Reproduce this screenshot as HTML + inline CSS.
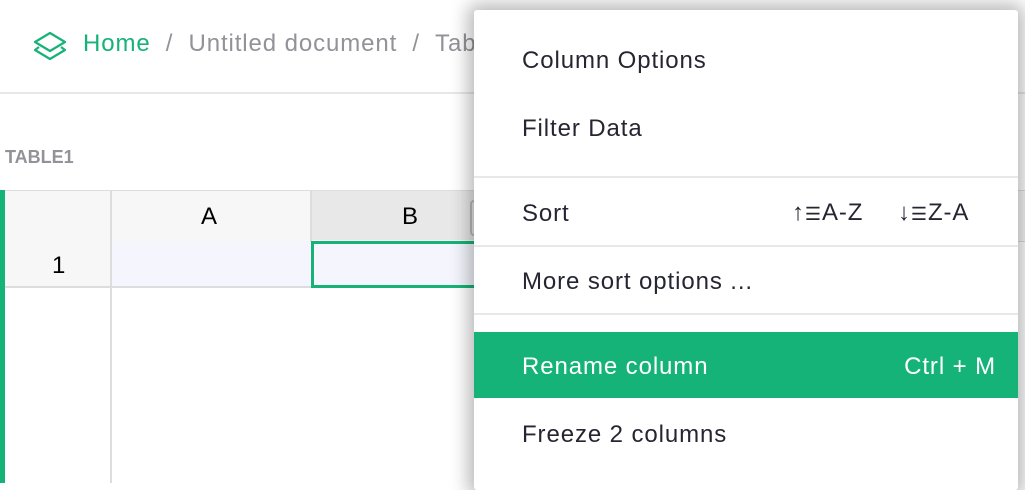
<!DOCTYPE html>
<html><head><style>
body{margin:0;width:1025px;height:483px;overflow:hidden;background:#fff;font-family:"Liberation Sans",sans-serif;position:relative}
.a{position:absolute}
.t{font-size:24px;color:#262633;letter-spacing:0.9px}
</style></head><body>
<svg class="a" style="left:33px;top:31px" width="34" height="30" viewBox="0 0 34 30"><g fill="none" stroke="#16b378" stroke-width="2.2" stroke-linejoin="round"><path d="M17 2 L32 11 L17 20 L2 11 Z"/><path d="M6 16 L2 19 L17 28 L32 19 L28 16"/></g></svg>
<div class="a" style="left:83px;top:30px;font-size:24px;letter-spacing:0.9px;color:#929299;white-space:nowrap"><span style="color:#16b378">Home</span> &nbsp;/ &nbsp;Untitled document &nbsp;/ &nbsp;Table1</div>
<div class="a" style="left:0;top:92px;width:1025px;height:2px;background:#e8e8e8"></div>
<div class="a" style="left:5px;top:147px;font-size:18px;font-weight:bold;color:#929299">TABLE1</div>
<div class="a" style="left:0;top:190px;width:5px;height:293px;background:#16b378"></div>
<div class="a" style="left:5px;top:190px;width:1020px;height:50px;background:#f7f7f7;border-top:1px solid #ddd;border-bottom:1px solid #ddd"></div>
<div class="a" style="left:310px;top:191px;width:200px;height:49px;background:#e8e8e8"></div>
<div class="a" style="left:5px;top:241px;width:105px;height:45px;background:#f7f7f7"></div>
<div class="a" style="left:110px;top:191px;width:2px;height:292px;background:#ddd"></div>
<div class="a" style="left:310px;top:191px;width:2px;height:50px;background:#ddd"></div>
<div class="a" style="left:112px;top:241px;width:198px;height:45px;background:#f4f5fd"></div>
<div class="a" style="left:5px;top:286px;width:505px;height:2px;background:#ddd"></div>
<div class="a" style="left:311px;top:241px;width:160px;height:41px;background:#f4f5fd;border:3px solid #16b378"></div>
<div class="a t" style="left:201px;top:203px;color:#000">A</div>
<div class="a t" style="left:402px;top:203px;color:#000">B</div>
<div class="a t" style="left:52px;top:252px;color:#000">1</div>
<div class="a" style="left:470px;top:200px;width:8px;height:32px;border:2px solid #bbb;border-radius:4px"></div>
<div class="a" style="left:474px;top:10px;width:544px;height:480px;background:#fff;border-radius:3px;box-shadow:0 0 18px 6px rgba(0,0,0,0.28)">
<div class="a t" style="left:48px;top:37px">Column Options</div>
<div class="a t" style="left:48px;top:105px">Filter Data</div>
<div class="a" style="left:0;top:166px;width:544px;height:2px;background:#e8e8e8"></div>
<div class="a t" style="left:48px;top:190px">Sort</div>
<div class="a t" style="left:318px;top:189px">↑<span style="font-size:18px">☰</span>A-Z</div>
<div class="a t" style="left:424px;top:189px">↓<span style="font-size:18px">☰</span>Z-A</div>
<div class="a" style="left:0;top:235px;width:544px;height:2px;background:#e8e8e8"></div>
<div class="a t" style="left:48px;top:258px">More sort options ...</div>
<div class="a" style="left:0;top:303px;width:544px;height:2px;background:#e8e8e8"></div>
<div class="a" style="left:0;top:322px;width:544px;height:66px;background:#16b378"></div>
<div class="a t" style="left:48px;top:343px;color:#fff">Rename column</div>
<div class="a t" style="right:22px;top:343px;color:#fff">Ctrl + M</div>
<div class="a t" style="left:48px;top:411px">Freeze 2 columns</div>
</div>
</body></html>
